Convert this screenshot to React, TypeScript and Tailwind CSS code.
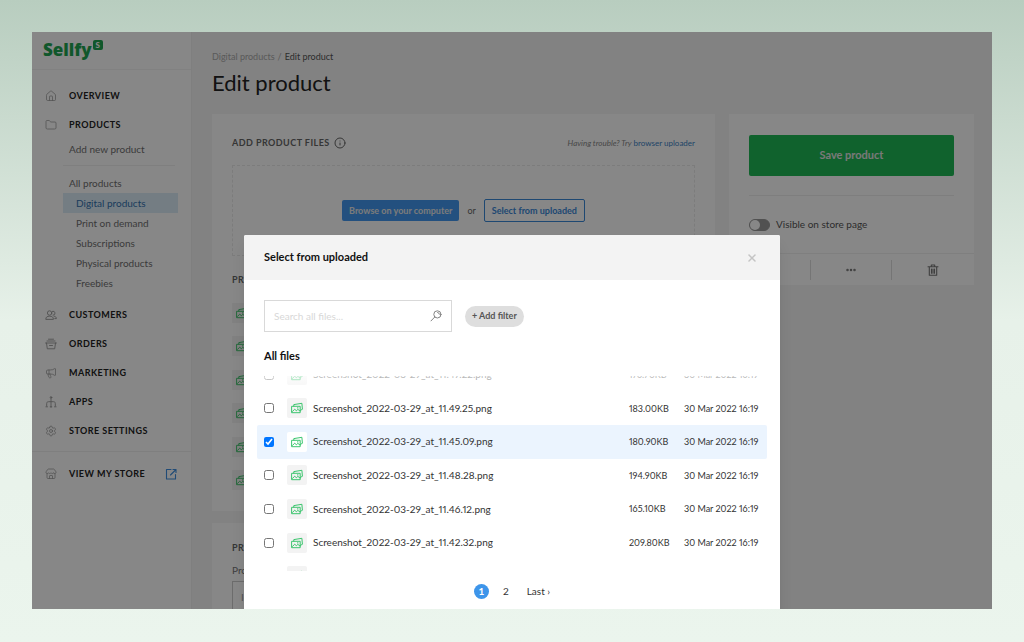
import { Ellipsis, Folder, House, Info, Megaphone, Settings, Store, X } from "lucide-react";
import type { ReactNode } from "react";

const productLinks = ["Digital products", "Print on demand", "Subscriptions", "Physical products", "Freebies"];

const files = [
    { time: "11.47.22", size: "176.70KB" },
    { time: "11.49.25", size: "183.00KB" },
    { time: "11.45.09", size: "180.90KB", checked: true },
    { time: "11.48.28", size: "194.90KB" },
    { time: "11.46.12", size: "165.10KB" },
    { time: "11.42.32", size: "209.80KB" },
    { time: "11.41.08", size: "172.40KB" },
];

/* 12px line icons that lucide does not have in this shape */
function LineIcon({ children, className = "" }: { children: ReactNode; className?: string }) {
    return (
        <svg viewBox="0 0 12 12" className={`size-3 ${className}`} fill="none" stroke="currentColor" strokeWidth="0.9" strokeLinejoin="round" strokeLinecap="round">
            {children}
        </svg>
    );
}

function PictureIcon() {
    return (
        <LineIcon>
            <path d="M1 4.3h8.200v6.400H1z" />
            <path d="M2.800 4V2.600L10.900 1.300l.5 6-1.900 1" />
            <path d="M1.400 9.500l2.300-2.300 1.600 1.500 1.600-1.300 2 1.600" />
            <path d="M6.400 5.900h.6" />
        </LineIcon>
    );
}

function CustomersIcon() {
    return (
        <LineIcon>
            <circle cx="4.6" cy="4" r="2.2" />
            <path d="M.8 10c0-2 1.4-2.8 3.8-2.8S8.400 8 8.400 10z" />
            <path d="M7.400 2.300a2 2 0 1 1 .6 3.900M9 7.200c1.500.2 2.300.9 2.400 2.400h-1.600" />
        </LineIcon>
    );
}

function BasketIcon() {
    return (
        <LineIcon>
            <path d="M.6 5h10.800M1.500 5l.8 5.800h7.400l.8-5.800M2 3h8M3.500 1.200h5M4.500 7.500h3" />
        </LineIcon>
    );
}

function AppsIcon() {
    return (
        <LineIcon>
            <path d="M6 2.200v9M1.700 10V7.500c0-1.200.6-1.800 1.800-1.800h5c1.200 0 1.800.6 1.800 1.800V10" />
            <circle cx="6" cy="1.400" r=".8" />
            <path d="M.9 10.800h1.600M9.500 10.800h1.600M5.200 10.800h1.600" />
        </LineIcon>
    );
}

function OpenIcon() {
    return (
        <LineIcon>
            <path strokeWidth="1.1" d="M6 1.500H1.500v9.500h9V6.500M8 1.500h3v3M11 1.500 5.500 7" />
        </LineIcon>
    );
}

function TrashIcon() {
    return (
        <LineIcon>
            <path strokeWidth="1.1" d="M1 2.800h10M4.300 2.600V1h3.400v1.600M2.300 3v8.300h7.400V3M4.500 5v4.300M6 5v4.300M7.500 5v4.300" />
        </LineIcon>
    );
}

const lowerNav = [
    { label: "CUSTOMERS", icon: <CustomersIcon /> },
    { label: "ORDERS", icon: <BasketIcon /> },
    { label: "MARKETING", icon: <Megaphone className="size-3" strokeWidth={1.5} /> },
    { label: "APPS", icon: <AppsIcon /> },
    { label: "STORE SETTINGS", icon: <Settings className="size-3" strokeWidth={1.5} /> },
];

function NavItem({ label, icon }: { label: string; icon: ReactNode }) {
    return (
        <a href="#" className="flex h-[29px] items-center gap-3 px-[13px] text-[9px] font-bold tracking-wider text-[#222]">
            <span className="text-[#999]">{icon}</span>
            {label}
        </a>
    );
}

function Sidebar() {
    return (
        <aside className="w-40 shrink-0 border-r border-[#f0f0f0] bg-white text-[#707070]">
            {/* Logo */}
            <div className="flex h-[38px] items-start gap-px border-b border-[#f3f3f3] pt-2 pl-[11px]">
                <span className="font-['Open_Sans',sans-serif] text-[17px] leading-5 font-extrabold text-[#1fa552]">Sellfy</span>
                <span className="flex size-[10px] items-center justify-center rounded-[2px] bg-[#1fa552] text-[8px] leading-none font-black text-white">
                    S
                </span>
            </div>

            <nav className="pt-[11px] text-[10px]">
                <NavItem label="OVERVIEW" icon={<House className="size-3" strokeWidth={1.5} />} />
                <NavItem label="PRODUCTS" icon={<Folder className="size-3" strokeWidth={1.5} />} />
                <a href="#" className="ml-[37px] flex h-5 items-center">Add new product</a>
                <hr className="mt-[6px] mr-4 mb-[7px] ml-[31px] border-[#f0f0f0]" />
                <a href="#" className="ml-[37px] flex h-5 items-center">All products</a>
                {productLinks.map((link, i) => (
                    <a
                        key={link}
                        href="#"
                        className={`mr-[13px] ml-[31px] flex h-5 items-center px-[13px] ${i === 0 ? "bg-[#dcecf8] text-[#3272ae]" : ""}`}
                    >
                        {link}
                    </a>
                ))}
                <div className="mt-[7px] border-b border-[#f0f0f0] pb-[6px]">
                    {lowerNav.map((item) => (
                        <NavItem key={item.label} {...item} />
                    ))}
                </div>
                <div className="mt-[7px] flex items-center justify-between pr-[14px]">
                    <NavItem label="VIEW MY STORE" icon={<Store className="size-3" strokeWidth={1.5} />} />
                    <span className="text-[#3d8fe0]">
                        <OpenIcon />
                    </span>
                </div>
            </nav>
        </aside>
    );
}

function FilesCard() {
    return (
        <section className="bg-white px-5 pt-5 pb-[14px]">
            <div className="flex items-center justify-between">
                <h2 className="flex h-[18px] items-center gap-1 text-[9px] font-bold tracking-wider text-[#666]">
                    ADD PRODUCT FILES
                    <Info className="size-3" strokeWidth={2} />
                </h2>
                <p className="text-[8px] text-[#888]">
                    <span className="italic">Having trouble? Try</span> <a href="#" className="text-[#3a7fc4]">browser uploader</a>
                </p>
            </div>
            <div className="mt-[13px] flex h-[91px] items-center justify-center gap-2 border border-dashed border-[#ebebeb] text-[9px] text-[#666]">
                <button className="h-[21px] rounded-xs bg-[#4298f0] px-[7px] font-bold text-[#e8e8e8]">Browse on your computer</button>
                or
                <button className="h-[23px] rounded-xs border border-[#3a88d8] px-[7px] font-bold text-[#3a88d8]">Select from uploaded</button>
            </div>
            <h2 className="mt-[15px] text-[9px] leading-[18px] font-bold tracking-wider text-[#666]">PRODUCT FILES</h2>
            <ul className="mt-[7px] flex h-[201px] flex-col">
                {files.slice(1).map((file) => (
                    <li key={file.time} className="flex flex-1 items-center">
                        <span className="flex size-5 items-center justify-center bg-[#f3f3f3] text-[#2fbf60]">
                            <PictureIcon />
                        </span>
                    </li>
                ))}
            </ul>
        </section>
    );
}

function SaveCard() {
    return (
        <section className="bg-white">
            <div className="px-5 pt-[21px]">
                <button className="h-[41px] w-full rounded-xs bg-[#1fb955] text-[11px] font-bold text-[#e4e4e4]">Save product</button>
                <hr className="mt-[19px] border-[#efefef]" />
                <label className="flex h-[57px] items-center gap-[6px] text-[10px] text-[#555]">
                    <input
                        type="checkbox"
                        role="switch"
                        className="flex h-3 w-[21px] appearance-none rounded-full border border-[#999] bg-[#999] before:size-[10px] before:rounded-full before:bg-white"
                    />
                    Visible on store page
                </label>
            </div>
            <div className="grid h-8 grid-cols-3 items-center divide-x divide-[#ddd] border-t border-[#f0f0f0] text-[#777]">
                <button aria-label="View" className="flex h-5 items-center justify-center">
                    <OpenIcon />
                </button>
                <button aria-label="More" className="flex h-5 items-center justify-center">
                    <Ellipsis className="size-3" strokeWidth={3} />
                </button>
                <button aria-label="Delete" className="flex h-5 items-center justify-center">
                    <TrashIcon />
                </button>
            </div>
        </section>
    );
}

function UploadedDialog() {
    return (
        <div
            role="dialog"
            aria-labelledby="dialog-title"
            className="absolute inset-x-0 top-[203px] mx-auto w-[536px] overflow-hidden rounded-t-xs bg-white shadow-lg"
        >
            <header className="flex h-[45px] items-center justify-between bg-[#f3f3f3] pr-[22px] pl-5">
                <h2 id="dialog-title" className="text-[11px] font-bold text-[#111]">Select from uploaded</h2>
                <button aria-label="Close" className="text-[#c4c4c4]">
                    <X className="size-3" strokeWidth={3} />
                </button>
            </header>

            <div className="px-[13px] pt-5 pb-8">
                <div className="flex items-center gap-[13px] pl-[7px]">
                    <div className="flex h-8 w-[188px] items-center border border-[#d9d9d9] px-[9px]">
                        <input
                            type="search"
                            aria-label="Search all files"
                            placeholder="Search all files..."
                            className="min-w-0 flex-1 text-[10px] outline-none placeholder:text-[#d8d8d8]"
                        />
                        <LineIcon className="text-[#777]">
                            <circle cx="7.4" cy="4.4" r="3.6" />
                            <path d="M4.8 7 1 10.9M7.6 2.4a2 2 0 0 1 1.8 1.8" />
                        </LineIcon>
                    </div>
                    <button className="h-[21px] rounded-full bg-[#dedede] px-[7px] text-[9px] font-bold text-[#555]">+ Add filter</button>
                </div>

                <h3 className="mt-4 pl-[7px] text-[11px] leading-4 font-bold text-[#111]">All files</h3>

                <div className="relative mt-3 h-[195px] overflow-hidden">
                    <table className="-mt-[18px] h-[235px] w-full table-fixed text-left text-[9px] text-[#333] proportional-nums">
                        <colgroup>
                            <col className="w-[30px]" />
                            <col className="w-[26px]" />
                            <col />
                            <col className="w-[55px]" />
                            <col className="w-[83px]" />
                        </colgroup>
                        <tbody>
                            {files.map((file) => (
                                <tr key={file.time} className={file.checked ? "bg-[#ebf4fe]" : ""}>
                                    <td className="rounded-l-xs pl-[7px]">
                                        <input type="checkbox" id={file.time} defaultChecked={file.checked} className="block size-[10px]" />
                                    </td>
                                    <td>
                                        <span className={`flex size-5 items-center justify-center rounded-xs text-[#27c05f] ${file.checked ? "bg-white" : "bg-[#f3f3f3]"}`}>
                                            <PictureIcon />
                                        </span>
                                    </td>
                                    <td className="text-[10px]">
                                        <label htmlFor={file.time}>Screenshot_2022-03-29_at_{file.time}.png</label>
                                    </td>
                                    <td>{file.size}</td>
                                    <td className="rounded-r-xs whitespace-nowrap">30 Mar 2022 16:19</td>
                                </tr>
                            ))}
                        </tbody>
                    </table>
                    {/* Fade at the top of the scrolled list */}
                    <div className="pointer-events-none absolute inset-x-0 top-0 h-3 bg-linear-to-b from-white/70 to-white/30" />
                </div>

                <nav aria-label="Pages" className="mt-[13px] flex items-center justify-center gap-[14px] text-[10px] text-[#333]">
                    <a href="#" className="flex size-[15px] items-center justify-center rounded-full bg-[#3d95ea] font-bold text-white">1</a>
                    <a href="#">2</a>
                    <a href="#" className="ml-1">Last ›</a>
                </nav>
            </div>
        </div>
    );
}

export default function App() {
    return (
        <div className="flex h-screen flex-col bg-linear-to-b from-[#b8cdbf] via-[#e7f1e9] to-[#ebf5ed] px-8 pt-8 pb-[33px] font-[Lato,sans-serif]">
            <div className="relative flex min-h-0 flex-1 overflow-hidden bg-[#f5f5f5]">
                <Sidebar />
                <main className="min-w-0 flex-1 pt-[18px] pr-[18px] pl-5">
                    <p className="flex gap-[3px] text-[9px] leading-[14px] text-[#aaa]">
                        <span>Digital products</span>
                        <span>/</span>
                        <span className="text-[#555]">Edit product</span>
                    </p>
                    <h1 className="mt-[5px] mb-[17px] text-[22px] leading-7 text-[#222]">Edit product</h1>
                    <div className="flex items-start gap-[14px]">
                        <div className="flex min-w-0 flex-1 flex-col gap-3">
                            <FilesCard />
                            <section className="bg-white px-5 pt-4 pb-5">
                                <h2 className="text-[9px] leading-[18px] font-bold tracking-wider text-[#666]">PRODUCT DETAILS</h2>
                                <label htmlFor="name" className="mt-[6px] block text-[10px] leading-[14px] text-[#777]">Product name</label>
                                <input id="name" defaultValue="Icons" className="mt-1 h-8 w-full border border-[#ccc] px-2 text-[10px] text-[#999]" />
                            </section>
                        </div>
                        <div className="w-[245px] shrink-0">
                            <SaveCard />
                        </div>
                    </div>
                </main>
                <div className="absolute inset-0 bg-black/47" />
                <UploadedDialog />
            </div>
        </div>
    );
}
